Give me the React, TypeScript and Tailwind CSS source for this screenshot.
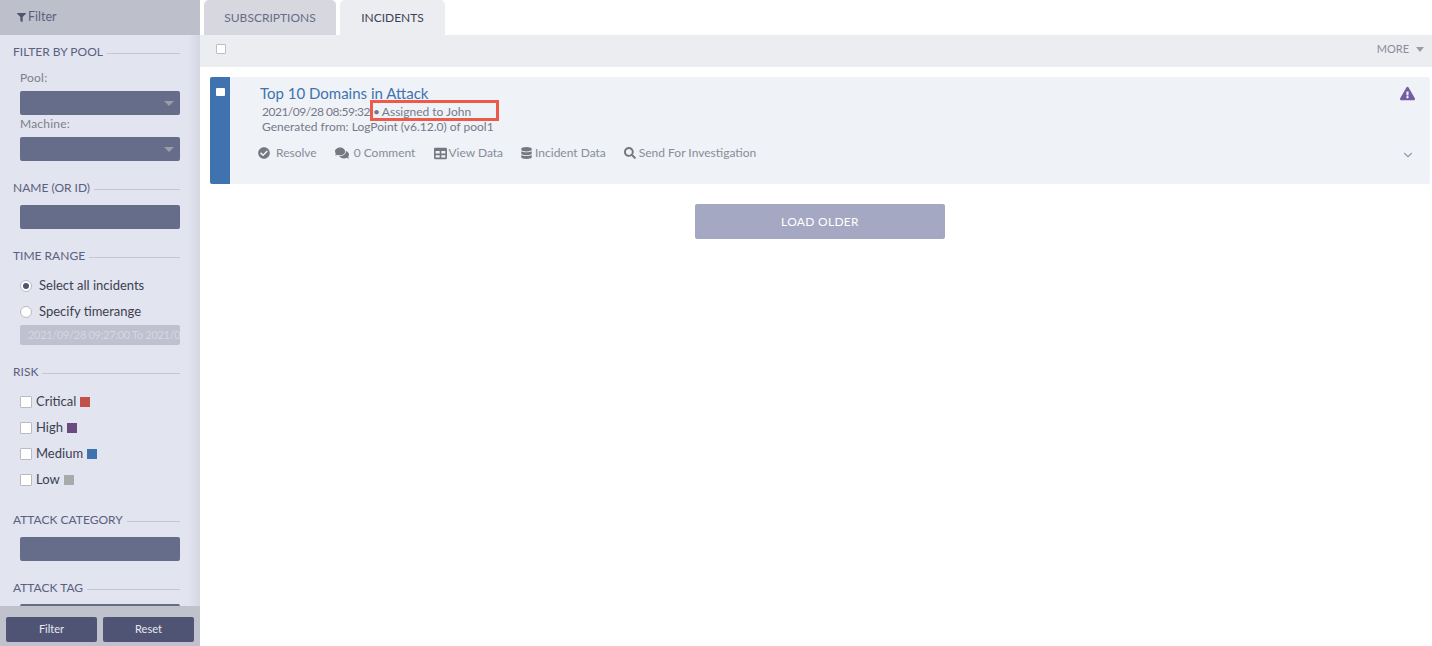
import { ChevronDown } from "lucide-react";
import {
  FaCheckCircle,
  FaComments,
  FaDatabase,
  FaExclamationTriangle,
  FaFilter,
  FaSearch,
  FaTable,
} from "react-icons/fa";

function SectionTitle({ title, className }: { title: string; className: string }) {
  return (
    <div className={`flex items-center gap-1 pl-[13px] pr-5 h-4 ${className}`}>
      <span className="text-[12px] leading-4 text-[#5b6080] whitespace-nowrap">{title}</span>
      <span className="flex-1 h-px mt-[3px] bg-[#c6c8d0]" />
    </div>
  );
}

function FieldBox({ className, arrow }: { className: string; arrow?: boolean }) {
  return (
    <div className={`mx-5 h-6 bg-[#666d8a] rounded-[2px] flex items-center justify-end pr-[6px] ${className}`}>
      {arrow && <span className="w-0 h-0 border-x-[5px] border-x-transparent border-t-[5px] border-t-[#9b9ca6]" />}
    </div>
  );
}

function RiskRow({ label, color, className }: { label: string; color: string; className: string }) {
  return (
    <div className={`flex items-center pl-5 h-[18px] ${className}`}>
      <span className="w-3 h-3 bg-white border border-[#b9bac2] rounded-[1px]" />
      <span className="ml-[4px] text-[13px] text-[#3c3f50]">{label}</span>
      <span className={`ml-[4px] w-[10px] h-[10px] ${color}`} />
    </div>
  );
}

function Action({ icon, label, className }: { icon: React.ReactNode; label: string; className: string }) {
  return (
    <span className={`flex items-center whitespace-nowrap ${className}`}>
      {icon}
      {label}
    </span>
  );
}

function Sidebar() {
  return (
    <aside className="relative w-[200px] h-[646px] shrink-0 flex flex-col bg-gradient-to-r from-[#e2e4ef] from-[94%] to-[#d5d7e3] overflow-hidden">
      <div className="h-[35px] shrink-0 bg-[#bdbfcb] flex items-center pl-[17px] text-[12.5px] text-[#5b6080]">
        <FaFilter className="w-[9px] h-[9px] mr-[2px] text-[#4f5470]" />
        Filter
      </div>
      <div className="flex-1 min-h-0 overflow-hidden">
        <SectionTitle title="FILTER BY POOL" className="mt-[9px]" />
        <div className="mt-[10px] pl-5 h-4 text-[12px] leading-4 tracking-[0.2px] text-[#7d7f8a]">Pool:</div>
        <FieldBox className="mt-[5px]" arrow />
        <div className="mt-[1px] pl-5 h-4 text-[12px] leading-4 tracking-[0.2px] text-[#7d7f8a]">Machine:</div>
        <FieldBox className="mt-[5px]" arrow />
        <SectionTitle title="NAME (OR ID)" className="mt-[19px]" />
        <FieldBox className="mt-[9px]" />
        <SectionTitle title="TIME RANGE" className="mt-[19px]" />
        <div className="mt-[13px] flex items-center pl-5 h-[18px] text-[13px] text-[#3c3f50]">
          <span className="w-3 h-3 rounded-full bg-white border border-[#b9bac2] flex items-center justify-center">
            <span className="w-[6px] h-[6px] rounded-full bg-[#4f5470]" />
          </span>
          <span className="ml-[7px]">Select all incidents</span>
        </div>
        <div className="mt-2 flex items-center pl-5 h-[18px] text-[13px] text-[#3c3f50]">
          <span className="w-3 h-3 rounded-full bg-white border border-[#b9bac2]" />
          <span className="ml-[7px]">Specify timerange</span>
        </div>
        <div className="mt-[4px] mx-5 h-5 bg-[#bfc1d0] rounded-[2px] pl-2 overflow-hidden text-[11px] leading-5 tracking-[-0.3px] whitespace-nowrap text-[#d5d7e2]">
          2021/09/28 09:27:00 To 2021/09/28 09:27:00
        </div>
        <SectionTitle title="RISK" className="mt-[19px]" />
        <RiskRow label="Critical" color="bg-[#c4504a]" className="mt-[13px]" />
        <RiskRow label="High" color="bg-[#6a4a80]" className="mt-2" />
        <RiskRow label="Medium" color="bg-[#3f72af]" className="mt-2" />
        <RiskRow label="Low" color="bg-[#aaaaaa]" className="mt-2" />
        <SectionTitle title="ATTACK CATEGORY" className="mt-[23px]" />
        <FieldBox className="mt-[9px]" />
        <SectionTitle title="ATTACK TAG" className="mt-[19px]" />
        <FieldBox className="mt-[8px]" />
      </div>
      <div className="h-[40px] shrink-0 bg-[#bfc1cc] flex gap-[6px] pl-[6px] pr-[6px] pt-[11px]">
        <button className="w-[91px] h-[25px] bg-[#505474] rounded-[2px] text-[#e8e9f0] text-[11px]">Filter</button>
        <button className="w-[91px] h-[25px] bg-[#505474] rounded-[2px] text-[#e8e9f0] text-[11px]">Reset</button>
      </div>
    </aside>
  );
}

function App() {
  return (
    <div className="w-[1432px] h-[646px] flex overflow-hidden bg-white font-['Lato',sans-serif]">
      <Sidebar />
      <main className="flex-1 min-w-0 flex flex-col relative">
        <div className="h-[35px] flex items-end pl-1 gap-1 shrink-0">
          <div className="w-[132px] h-[35px] bg-[#d6d7df] rounded-t-[5px] flex items-center justify-center text-[12px] text-[#686c86]">
            SUBSCRIPTIONS
          </div>
          <div className="w-[105px] h-[35px] bg-[#ecedf1] rounded-t-[5px] flex items-center justify-center text-[12px] text-[#3f4255]">
            INCIDENTS
          </div>
        </div>
        <div className="h-8 shrink-0 bg-[#ecedf1] flex items-center justify-between pl-4 pr-2 pb-1">
          <span className="w-[10px] h-[10px] bg-white border border-[#bcbdc5] rounded-[1px]" />
          <span className="flex items-center text-[11px] text-[#8a8ca0]">
            MORE
            <span className="ml-[7px] w-0 h-0 border-x-[4.5px] border-x-transparent border-t-[5px] border-t-[#9b9ca6]" />
          </span>
        </div>
        <div className="mt-[10px] ml-[10px] mr-[2px] h-[107px] shrink-0 bg-[#eff2f7] rounded-[2px] flex relative">
          <div className="w-5 bg-[#3f72af] rounded-l-[2px] pt-[11px] pl-[6px]">
            <span className="block w-[9px] h-2 bg-white rounded-[1px]" />
          </div>
          <div className="flex-1 pl-[30px] pt-[6px]">
            <div className="text-[15px] leading-5 text-[#3f72af]">Top 10 Domains in Attack</div>
            <div className="pl-[2px] mt-[1px] flex text-[12px] leading-4 text-[#77798a]">
              <span className="tracking-[-0.5px]">2021/09/28 08:59:32</span>
              <span className="ml-[3px]">•</span>
              <span className="ml-[2px]">Assigned to John</span>
            </div>
            <div className="pl-[2px] -mt-[1px] text-[12px] leading-4 text-[#77798a]">Generated from: LogPoint (v6.12.0) of pool1</div>
            <div className="mt-[10px] h-4 flex items-center text-[12px] text-[#8a8c98]">
              <Action icon={<FaCheckCircle className="w-3 h-3 mr-[6px] text-[#77787f]" />} label="Resolve" className="-ml-[2px]" />
              <Action icon={<FaComments className="w-[14px] h-[14px] mr-[5px] text-[#77787f]" />} label="0 Comment" className="ml-[18px]" />
              <Action icon={<FaTable className="w-[13px] h-[13px] mr-[1px] text-[#77787f]" />} label="View Data" className="ml-[19px]" />
              <Action icon={<FaDatabase className="w-[11px] h-3 mr-[3px] text-[#77787f]" />} label="Incident Data" className="ml-[18px]" />
              <Action icon={<FaSearch className="w-3 h-3 mr-[3px] text-[#77787f]" />} label="Send For Investigation" className="ml-[18px]" />
            </div>
          </div>
          <div className="w-[30px] flex flex-col items-center pt-[9px] pr-[16px]">
            <FaExclamationTriangle className="w-[15px] h-[15px] shrink-0 text-[#735ea0]" />
            <ChevronDown className="mt-[47px] ml-[1px] w-[14px] h-[14px] shrink-0 text-[#9a9ba5]" />
          </div>
        </div>
        <button className="mt-5 ml-[495px] w-[250px] h-[35px] shrink-0 bg-[#a4a8c3] rounded-[2px] text-white text-[12px] tracking-[0.3px]">
          LOAD OLDER
        </button>
        <div className="absolute left-[170px] top-[100px] w-[129px] h-[21px] border-[3px] border-[#ee5a4a]" />
      </main>
    </div>
  );
}

export default App;
